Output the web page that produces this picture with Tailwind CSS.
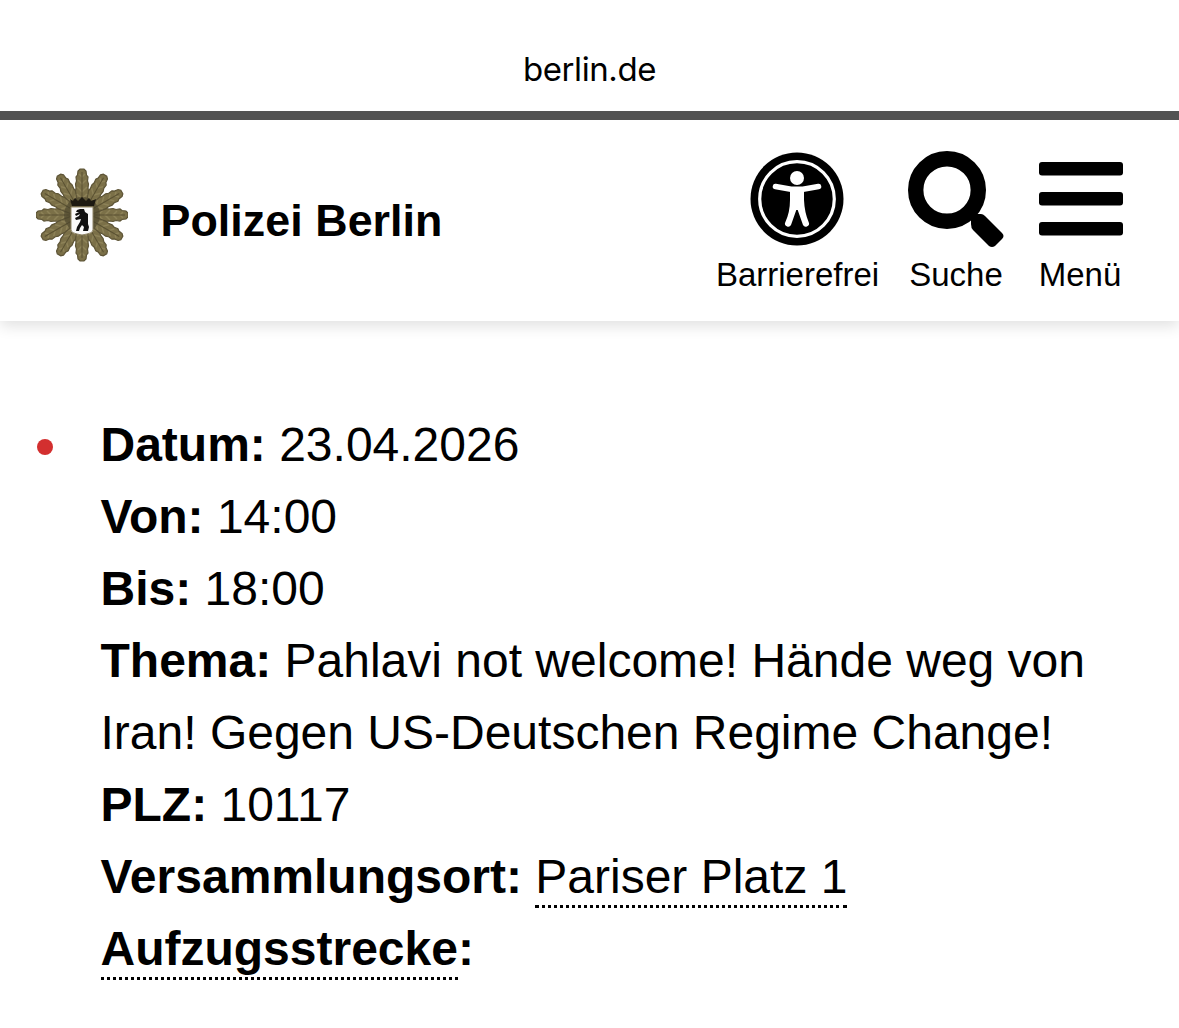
<!DOCTYPE html>
<html lang="de">
<head>
    <meta charset="UTF-8">
    <meta name="viewport" content="width=device-width, initial-scale=1.0">
    <title>Polizei Berlin</title>
    <script src="https://cdn.jsdelivr.net/npm/@tailwindcss/browser@4"></script>
</head>
<body class="bg-white text-black font-['Liberation_Sans',Arial,sans-serif] h-[1028px] overflow-hidden">
    <div class="relative z-10 bg-white h-[111px] pt-[49px] text-center text-[33px] leading-[40px] tracking-[-0.4px] font-['Inter',sans-serif]">berlin.de</div>

    <header class="h-[210px] border-t-[9px] border-[#525252] shadow-[0_5px_14px_rgba(0,0,0,0.12)] flex items-start pl-9 pr-[56px]">
        <svg class="w-[92px] h-[94px] mt-[48px] shrink-0" viewBox="-46 -47 92 94">
            <defs>
                <g id="ray">
                    <path d="M-4 -8L-6.500 -24L-6 -27L-6.500 -31L-5.500 -34L-6 -38L-4.500 -40L-4 -44L-2 -46H2L4 -44L4.500 -40L6 -38L5.500 -34L6.500 -31L6 -27L6.500 -24L4 -8Z" fill="#7b7048" stroke="#5d5436" stroke-width="1.2"/>
                    <path d="M-4 -35L0 -31L4 -35M-5 -28L0 -23L5 -28M-5 -21L0 -16L5 -21M-3 -41L0 -38L3 -41" fill="none" stroke="#8d8258" stroke-width="1.5"/>
                    <path d="M0 -43V-12" stroke="#5a5132" stroke-width="1"/>
                </g>
            </defs>
            <circle r="25" fill="#484027"/>
            <use href="#ray" transform="rotate(30)"/>
            <use href="#ray" transform="rotate(90)"/>
            <use href="#ray" transform="rotate(150)"/>
            <use href="#ray" transform="rotate(210)"/>
            <use href="#ray" transform="rotate(270)"/>
            <use href="#ray" transform="rotate(330)"/>
            <use href="#ray"/>
            <use href="#ray" transform="rotate(60)"/>
            <use href="#ray" transform="rotate(120)"/>
            <use href="#ray" transform="rotate(180)"/>
            <use href="#ray" transform="rotate(240)"/>
            <use href="#ray" transform="rotate(300)"/>
            <circle r="18" fill="#4a432b" opacity=".6"/>
            <path d="M-12 -16L-9 -14L-7 -17L-4 -14L0 -18L4 -14L7 -17L9 -14L14 -16L12 -9H-10Z" fill="#1d1a12"/>
            <path d="M-11 -8H11V15Q11 18 5 19L0 20L-5 19Q-11 18 -11 15Z" fill="#fafafa" stroke="#8f8567" stroke-width="1"/>
            <path d="M-2 -6L2 -6L3 -3L6 -1L6 9L7 12L6 16H1L2 12L0 10L-2 13L-3 16H-6L-5 12L-2 7L-1 4L-6 5L-7 3L-3 1L-2 -1L-6 1L-7 -1L-3 -3L-6 -3L-5 -5Z" fill="#111"/>
        </svg>
        <div class="ml-[32.500px] mt-[73px] text-[44.8px] leading-[54px] tracking-[0.05px] font-bold whitespace-nowrap">Polizei Berlin</div>

        <nav class="ml-auto flex text-[33px] leading-[40px]">
            <a class="flex flex-col items-center w-[165px] mr-[28px]">
                <svg class="w-[94px] h-[94px] mt-[32px] mb-[9px] ml-[-1px]" viewBox="-47 -47 94 94">
                    <circle r="46.5"/>
                    <circle r="37.3" fill="none" stroke="#fff" stroke-width="3.2"/>
                    <circle cy="-21" r="7" fill="#fff"/>
                    <path d="M-21.500 -12.500L-6 -9.700H6L21.500 -12.500" fill="none" stroke="#fff" stroke-width="5.600" stroke-linecap="round" stroke-linejoin="round"/>
                    <path d="M-7 -11H7V1Q7.500 13 11.600 23A3 3 0 0 1 6 26L0.700 11H-0.700L-6 26A3 3 0 0 1 -11.600 23Q-7 13 -7 1Z" fill="#fff"/>
                </svg>
                <span>Barrierefrei</span>
            </a>
            <a class="flex flex-col items-center w-[96px] mr-[35px]">
                <svg class="w-[96px] h-[97px] mt-[31px] mb-[7px]" viewBox="0 0 96 97">
                    <circle cx="39" cy="39" r="31.300" fill="none" stroke="#000" stroke-width="15.400"/>
                    <path d="M63 73V67L67 63H73Q75 63 77 65L94 82Q97 85 94 88L87 95Q84 97 81 95L65 79Q63 77 63 73Z"/>
                </svg>
                <span>Suche</span>
            </a>
            <a class="flex flex-col items-center w-[84px]">
                <svg class="w-[84px] h-[74px] mt-[42px] mb-[19px]" viewBox="0 0 84 74">
                    <rect width="84" height="13.500" rx="3"/>
                    <rect y="30" width="84" height="13.500" rx="3"/>
                    <rect y="60" width="84" height="13.500" rx="3"/>
                </svg>
                <span class="ml-[-2px]">Menü</span>
            </a>
        </nav>
    </header>

    <main class="pl-[37px] pt-[88px]">
        <ul>
            <li class="flex text-[48px] leading-[72px]">
                <span class="w-4 h-4 mt-[30px] mr-[47.500px] rounded-full bg-[#d32f2f] shrink-0"></span>
                <div class="whitespace-nowrap">
                    <strong>Datum:</strong> 23.04.2026<br>
                    <strong>Von:</strong> 14:00<br>
                    <strong>Bis:</strong> 18:00<br>
                    <strong>Thema:</strong> Pahlavi not welcome! Hände weg von<br>
                    Iran! Gegen US-Deutschen Regime Change!<br>
                    <strong>PLZ:</strong> 10117<br>
                    <strong>Versammlungsort:</strong> <span class="pb-[2px] border-b-[3px] border-dotted border-black">Pariser Platz 1</span><br>
                    <strong><span class="pb-[2px] border-b-[3px] border-dotted border-black">Aufzugsstrecke</span>:</strong>
                </div>
            </li>
        </ul>
    </main>
</body>
</html>
